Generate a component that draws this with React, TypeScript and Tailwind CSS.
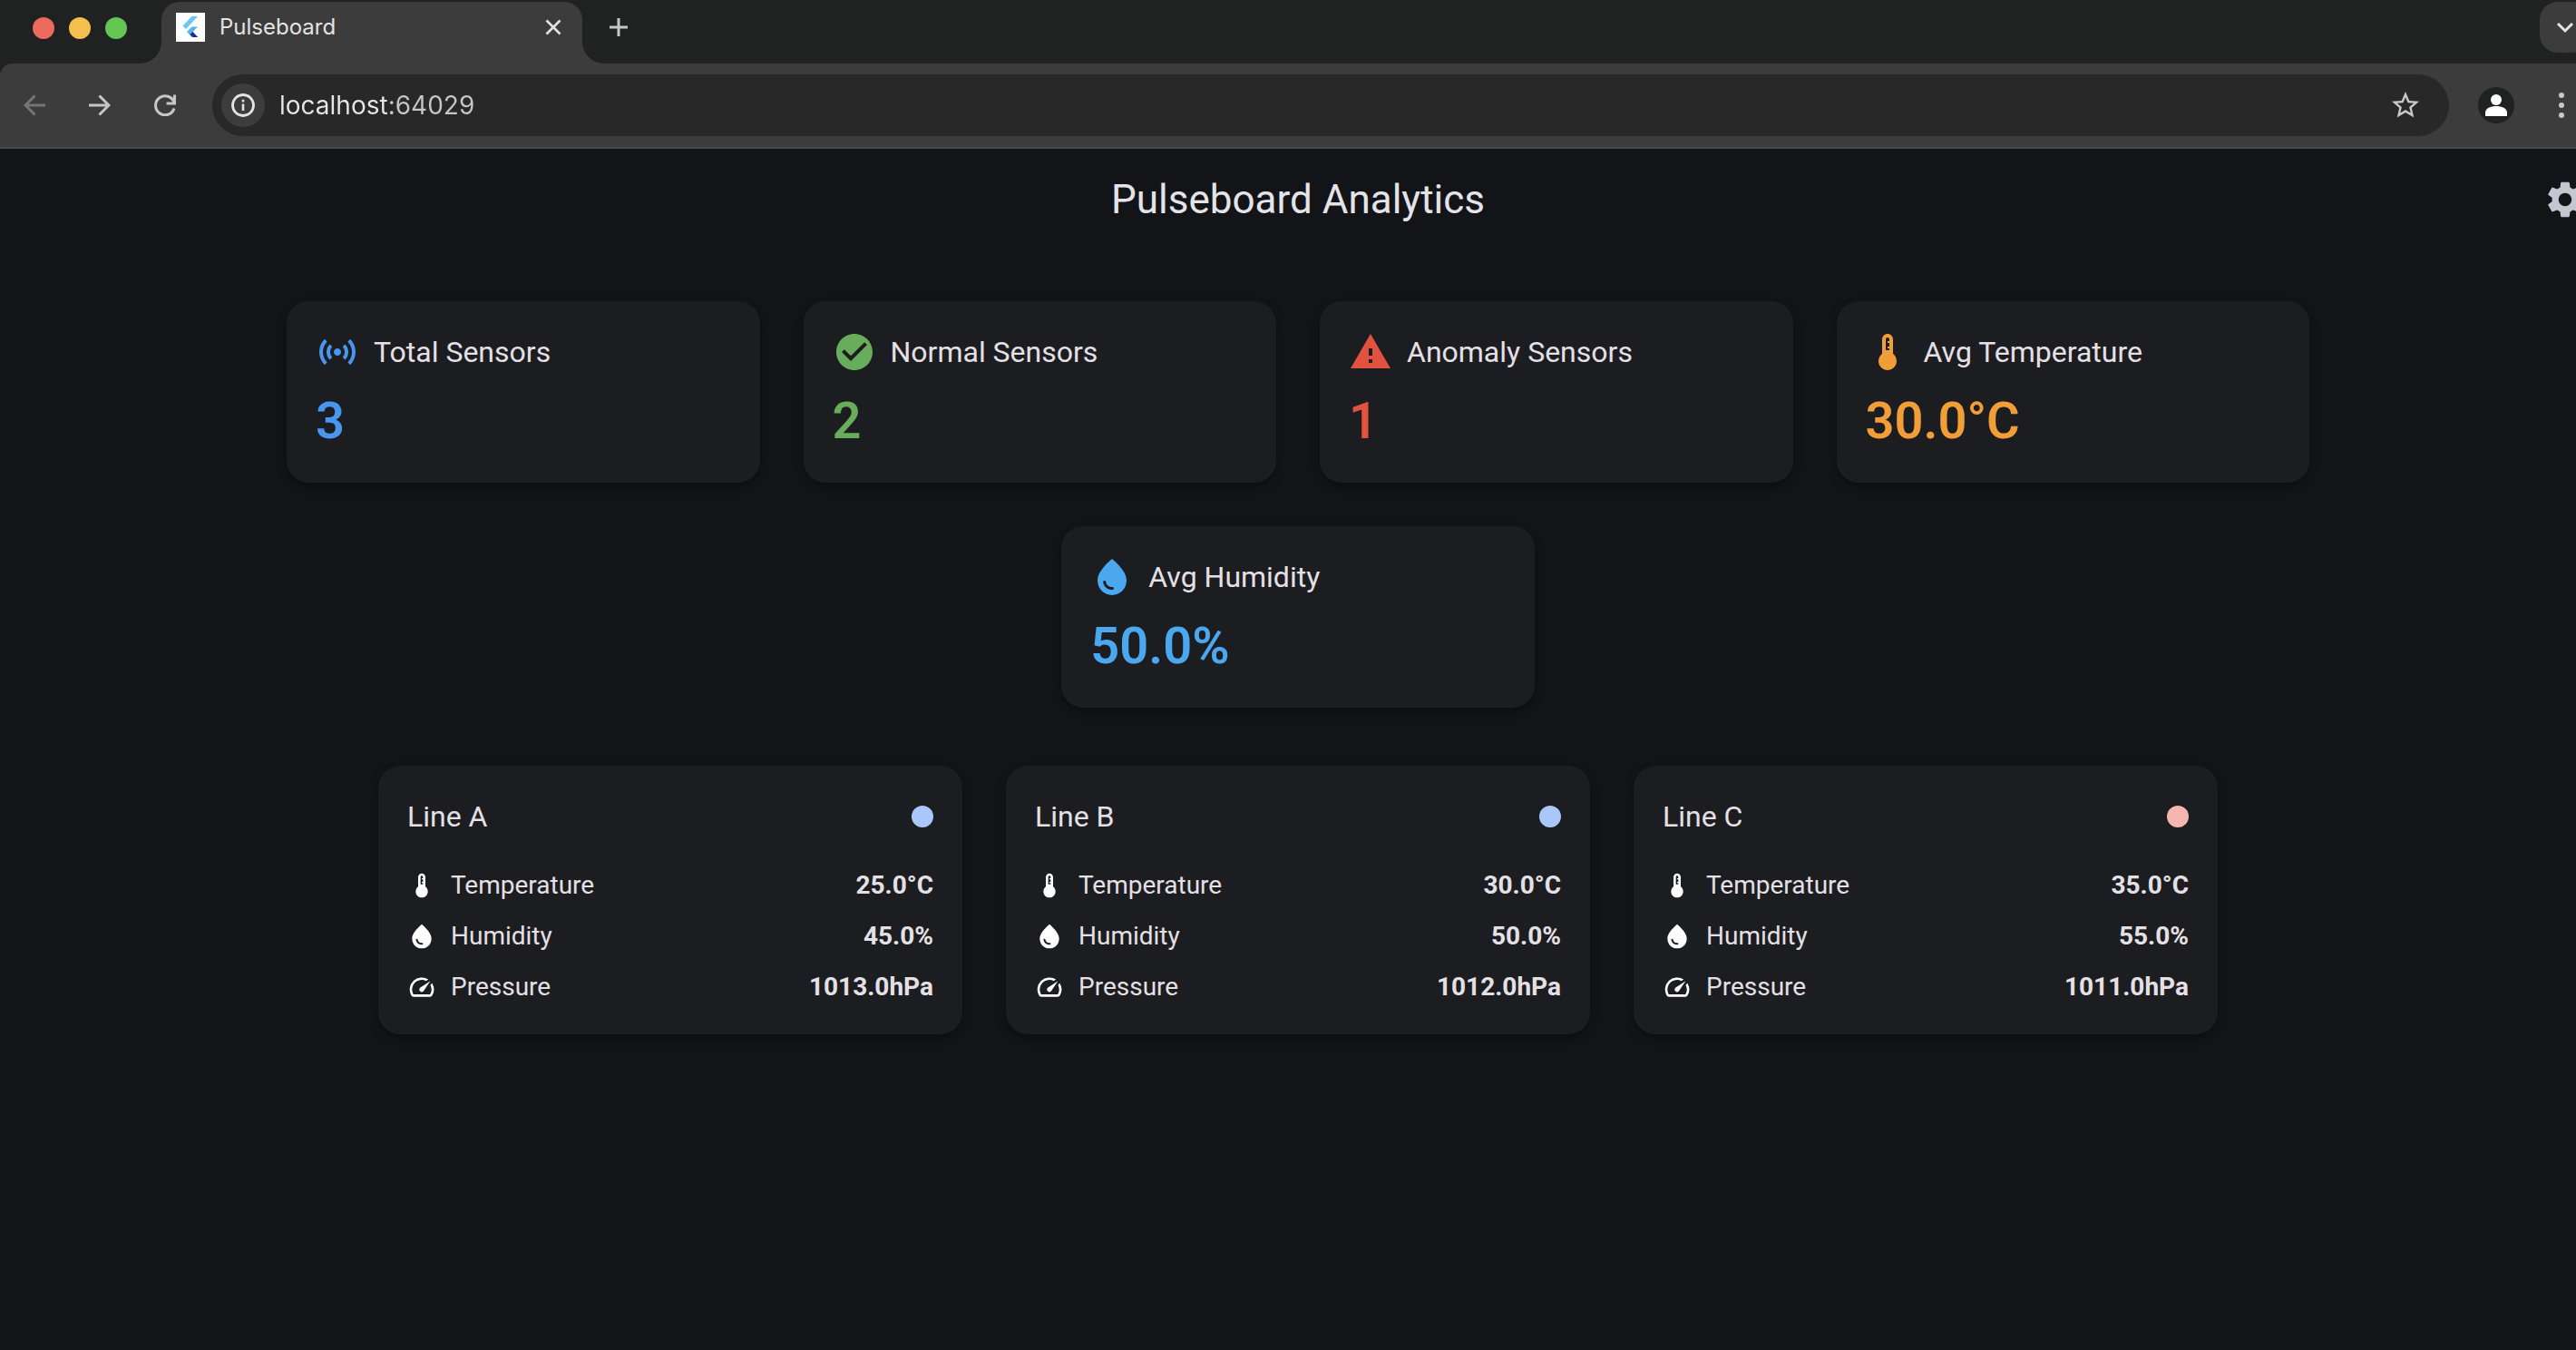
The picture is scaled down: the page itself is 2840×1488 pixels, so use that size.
import type { ReactNode } from "react";
import type { IconType } from "react-icons";
import {
  MdCheckCircle,
  MdSensors,
  MdSettings,
  MdSpeed,
  MdStarBorder,
  MdThermostat,
  MdWarning,
  MdWaterDrop,
} from "react-icons/md";

type Stat = { label: string; value: string; Icon: IconType; color: string };

const stats: Stat[] = [
  { label: "Total Sensors", value: "3", Icon: MdSensors, color: "text-[#4896f0]" },
  { label: "Normal Sensors", value: "2", Icon: MdCheckCircle, color: "text-[#68ad5b]" },
  { label: "Anomaly Sensors", value: "1", Icon: MdWarning, color: "text-[#e15241]" },
  { label: "Avg Temperature", value: "30.0°C", Icon: MdThermostat, color: "text-[#f19d38]" },
  { label: "Avg Humidity", value: "50.0%", Icon: MdWaterDrop, color: "text-[#4ba7ee]" },
];

type Line = {
  name: string;
  dot: string;
  status: string;
  temperature: string;
  humidity: string;
  pressure: string;
};

const lines: Line[] = [
  { name: "Line A", dot: "bg-[#aac7f9]", status: "Normal", temperature: "25.0°C", humidity: "45.0%", pressure: "1013.0hPa" },
  { name: "Line B", dot: "bg-[#aac7f9]", status: "Normal", temperature: "30.0°C", humidity: "50.0%", pressure: "1012.0hPa" },
  { name: "Line C", dot: "bg-[#f4b6ae]", status: "Anomaly", temperature: "35.0°C", humidity: "55.0%", pressure: "1011.0hPa" },
];

function Stroke({ d, className, width = 3 }: { d: string; className: string; width?: number }) {
  return (
    <svg viewBox="0 0 24 24" className={className} fill="none" stroke="currentColor" strokeWidth={width} aria-hidden="true">
      <path d={d} />
    </svg>
  );
}

function ToolButton({ label, children }: { label: string; children: ReactNode }) {
  return (
    <button type="button" aria-label={label} className="flex size-12 shrink-0 items-center justify-center">
      {children}
    </button>
  );
}

function FlutterMark() {
  return (
    <svg viewBox="0 0 32 32" className="size-8 shrink-0" aria-hidden="true">
      <rect width="32" height="32" fill="#fff" />
      <path d="M17.5 4H24L11 18l-3.500-3.500z" fill="#6bc5f8" />
      <path d="M17.500 15.500H24L18.500 21l5.500 6h-6.500L12 21z" fill="#54b4ee" />
      <path d="M15.500 24l3-3 5.500 6h-5.500z" fill="#16308c" />
    </svg>
  );
}

function TabStrip() {
  return (
    <div className="flex h-[70px] items-end bg-[#202221]">
      <div className="flex h-[70px] w-[178px] shrink-0 items-start gap-4 pt-[19px] pl-9">
        <button type="button" aria-label="Close window" className="size-6 rounded-full bg-[#ed6a5f]" />
        <button type="button" aria-label="Minimize window" className="size-6 rounded-full bg-[#f5bf4f]" />
        <button type="button" aria-label="Zoom window" className="size-6 rounded-full bg-[#62c554]" />
      </div>
      <div className="relative flex h-[68px] w-[464px] shrink-0 rounded-t-[20px] bg-[#3c3c3c] px-4 pt-1">
        <svg viewBox="0 0 24 24" className="absolute bottom-0 -left-6 size-6" aria-hidden="true">
          <path d="M24 0v24H0A24 24 0 0 0 24 0z" fill="#3c3c3c" />
        </svg>
        <svg viewBox="0 0 24 24" className="absolute -right-6 bottom-0 size-6" aria-hidden="true">
          <path d="M0 0v24h24A24 24 0 0 1 0 0z" fill="#3c3c3c" />
        </svg>
        <div className="flex h-12 w-full items-center gap-4">
          <FlutterMark />
          <span className="flex-1 text-[24px] leading-8 text-[#e3e3e3]">Pulseboard</span>
          <button type="button" aria-label="Close tab" className="flex size-8 items-center justify-center text-[#e3e3e3]">
            <Stroke d="M4.500 4.500l15 15M19.500 4.500l-15 15" className="size-6" width={2.600} />
          </button>
        </div>
      </div>
      <button type="button" aria-label="New tab" className="mb-4 ml-4 flex size-12 items-center justify-center text-[#c7c7c7]">
        <Stroke d="M12 2v20M2 12h20" className="size-6" />
      </button>
      <div className="flex-1" />
      <button type="button" aria-label="Search tabs" className="mb-3 flex size-14 items-center justify-center rounded-[20px] bg-[#3c3c3c] text-[#e3e3e3]">
        <Stroke d="M4 8l8 8 8-8" className="size-6" />
      </button>
    </div>
  );
}

function AddressBar() {
  return (
    <div className="bg-[#202221]">
      <div className="flex h-[94px] items-center rounded-tl-[14px] border-b-2 border-[#474947] bg-[#3c3c3c] pr-6 pl-[14px]">
        <div className="flex shrink-0 gap-6 text-[#c7c7c7]">
          <button type="button" aria-label="Back" disabled className="flex size-12 items-center justify-center text-[#757575]">
            <Stroke d="M24 12H2M12.500 1.500L2 12l10.500 10.500" className="size-6" />
          </button>
          <ToolButton label="Forward">
            <Stroke d="M0 12h22M11.500 1.500L22 12 11.500 22.500" className="size-6" />
          </ToolButton>
          <ToolButton label="Reload">
            <Stroke d="M22.500 0.500v9.500H13.500M22 9A10.500 10.500 0 1 0 22 15.500" className="size-6" />
          </ToolButton>
        </div>
        <div className="ml-7 flex h-[68px] flex-1 items-center rounded-full bg-[#282828] pr-6 pl-[10px]">
          <button type="button" aria-label="View site information" className="flex size-12 items-center justify-center rounded-full bg-[#3c3c3c] text-[#e3e3e3]">
            <svg viewBox="0 0 26 26" className="size-[26px]" fill="none" stroke="currentColor" strokeWidth="2.800" aria-hidden="true">
              <circle cx="13" cy="13" r="11.500" />
              <path d="M13 11.500v7.500M13 6.800v2.800" strokeWidth="2.600" />
            </svg>
          </button>
          <input
            aria-label="Address"
            defaultValue="localhost:64029"
            className="ml-4 min-w-0 flex-1 bg-[linear-gradient(90deg,#e8e8e8_122px,#c7c7c7_122px)] bg-clip-text text-[28px] leading-10 text-transparent caret-white outline-none"
          />
          <ToolButton label="Bookmark this page">
            <MdStarBorder className="size-9 text-[#c7c7c7]" />
          </ToolButton>
        </div>
        <button type="button" aria-label="Profile" className="ml-8 size-10 shrink-0 rounded-full bg-[#202221]">
          <svg viewBox="0 0 40 40" className="size-10" fill="#fff" aria-hidden="true">
            <circle cx="20" cy="14" r="6" />
            <path d="M8 32v-4c0-4.500 6-7 12-7s12 2.500 12 7v4z" />
          </svg>
        </button>
        <button type="button" aria-label="Browser menu" className="-mr-4 ml-7 flex size-12 shrink-0 items-center justify-center">
          <svg viewBox="0 0 6 28" className="h-7 w-1.5" fill="#c7c7c7" aria-hidden="true">
            <circle cx="3" cy="3" r="3" />
            <circle cx="3" cy="14" r="3" />
            <circle cx="3" cy="25" r="3" />
          </svg>
        </button>
      </div>
    </div>
  );
}

function StatCard({ label, value, Icon, color }: Stat) {
  return (
    <section className="flex w-[calc((100%-144px)/4)] flex-col gap-4 rounded-3xl bg-[#1c1d20] p-8 shadow-[0_4px_8px_rgba(0,0,0,0.35)]">
      <div className="flex items-center gap-4">
        <Icon className={`size-12 shrink-0 ${color}`} aria-hidden="true" />
        <h2 className="text-[32px] leading-[48px] text-[#e5e0e5]">{label}</h2>
      </div>
      <p className={`text-[56px] leading-[72px] font-semibold ${color}`}>{value}</p>
    </section>
  );
}

function Reading({ label, value, Icon }: { label: string; value: string; Icon: IconType }) {
  return (
    <div className="flex h-10 items-center">
      <dt className="flex flex-1 items-center gap-4">
        <Icon className="size-8 text-white" aria-hidden="true" />
        {label}
      </dt>
      <dd className="font-bold">{value}</dd>
    </div>
  );
}

function LineCard({ name, dot, status, temperature, humidity, pressure }: Line) {
  return (
    <section className="flex flex-1 flex-col gap-8 rounded-3xl bg-[#1c1d20] p-8 text-[#e5e0e5] shadow-[0_4px_8px_rgba(0,0,0,0.35)]">
      <div className="flex h-12 items-center justify-between">
        <h2 className="text-[32px] leading-[48px]">{name}</h2>
        <span role="img" aria-label={status} className={`size-6 rounded-full ${dot}`} />
      </div>
      <dl className="flex flex-col gap-4 text-[28px] leading-10">
        <Reading label="Temperature" value={temperature} Icon={MdThermostat} />
        <Reading label="Humidity" value={humidity} Icon={MdWaterDrop} />
        <Reading label="Pressure" value={pressure} Icon={MdSpeed} />
      </dl>
    </section>
  );
}

export default function App() {
  return (
    <div className="flex min-h-screen flex-col overflow-hidden bg-[#131418]">
      <header className="-mr-4 font-[Inter,sans-serif]">
        <TabStrip />
        <AddressBar />
      </header>
      <div className="-mr-[22px] font-[Roboto,sans-serif]">
        <div className="grid h-28 grid-cols-[1fr_auto_1fr] items-center">
          <h1 className="col-start-2 text-[44px] leading-[56px] text-[#e3e3e8]">Pulseboard Analytics</h1>
          <button type="button" aria-label="Settings" className="mr-[10px] justify-self-end text-[#c5c6d0]">
            <MdSettings className="size-12" />
          </button>
        </div>
        <main className="flex flex-col gap-16 px-8 pt-14 pb-8">
          <div className="mx-auto flex w-full max-w-[2230px] flex-wrap justify-center gap-12">
            {stats.map((stat) => (
              <StatCard key={stat.label} {...stat} />
            ))}
          </div>
          <div className="mx-auto flex w-full max-w-[2028px] gap-12">
            {lines.map((line) => (
              <LineCard key={line.name} {...line} />
            ))}
          </div>
        </main>
      </div>
    </div>
  );
}
